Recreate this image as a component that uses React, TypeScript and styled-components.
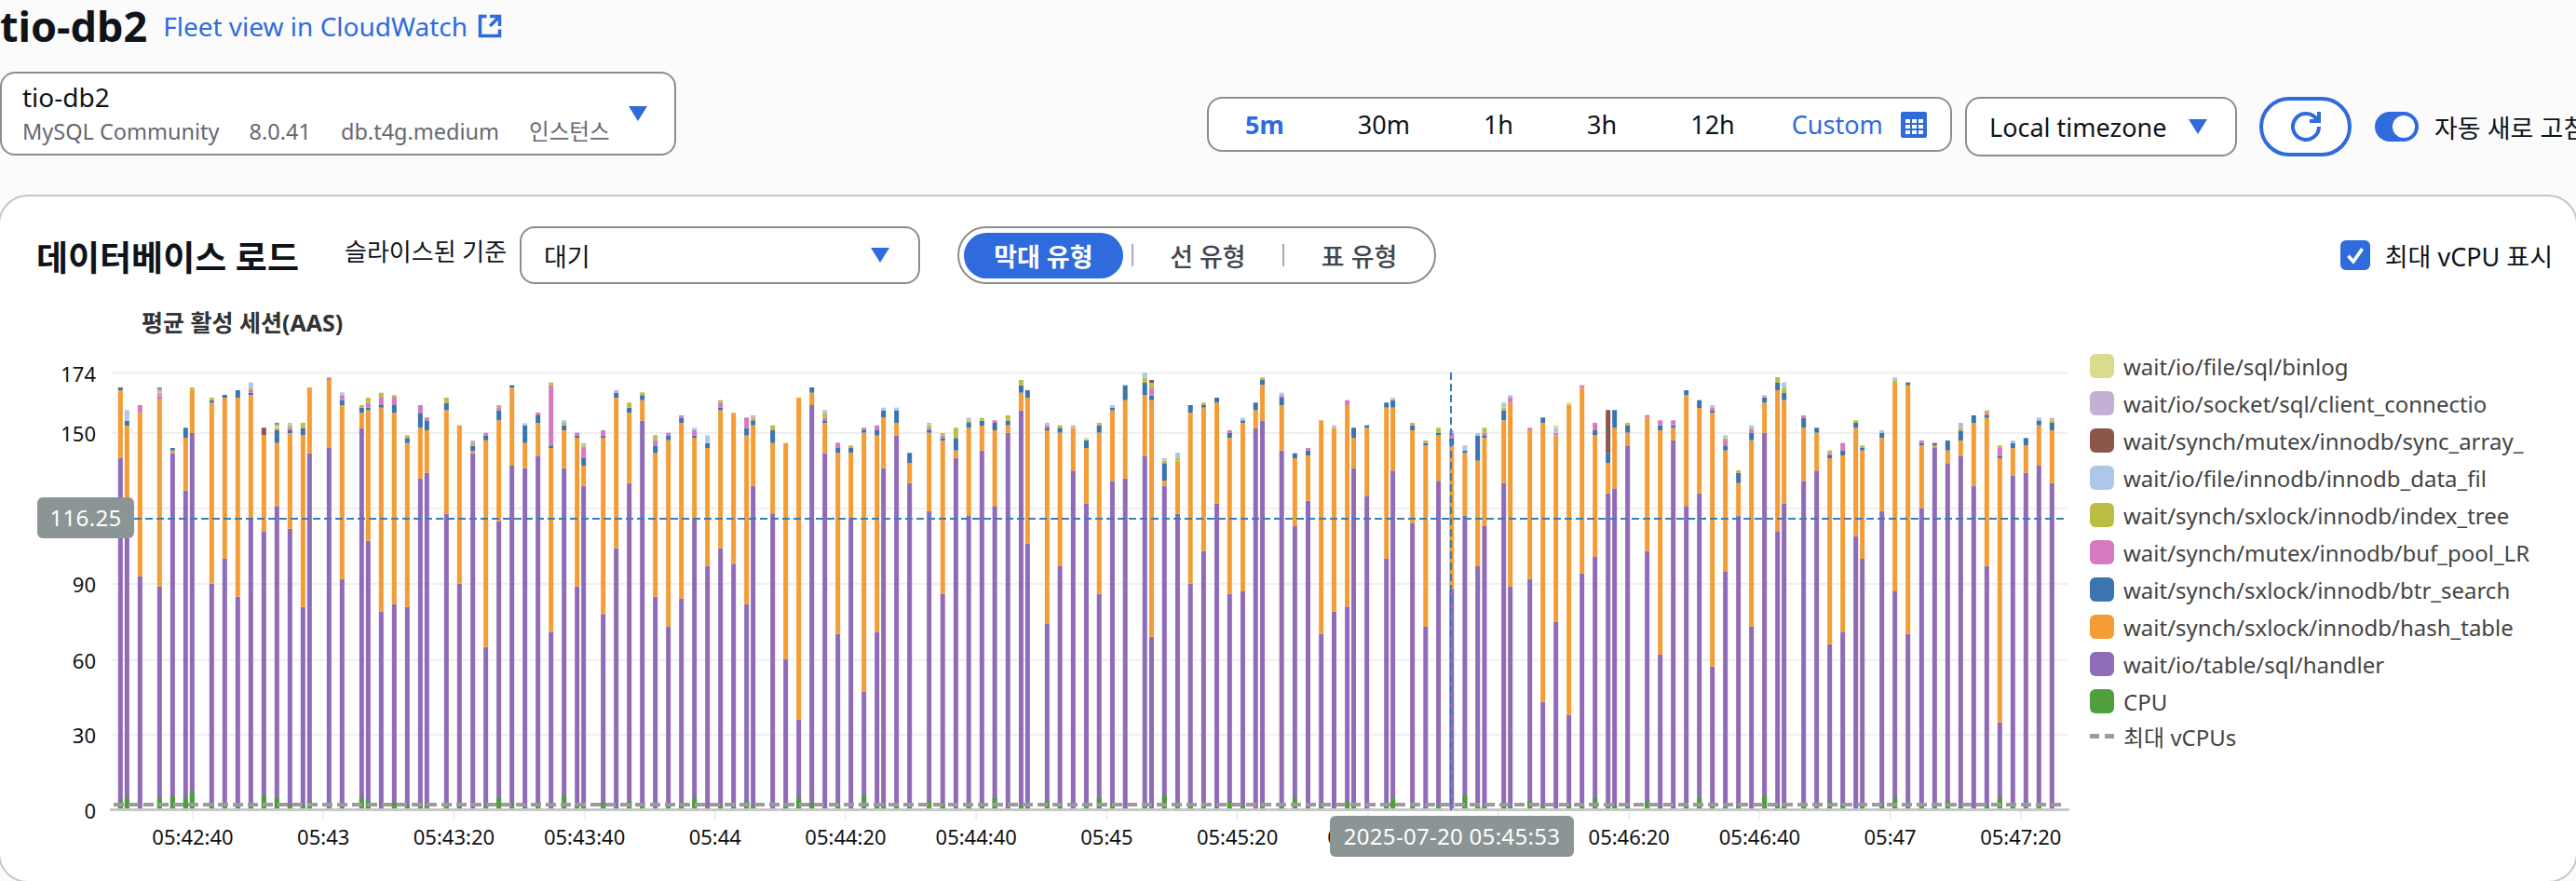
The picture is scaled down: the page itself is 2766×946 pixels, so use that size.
import React from "react";
import styled, { createGlobalStyle } from "styled-components";

const FONT = `"Noto Sans", "Noto Sans CJK KR", sans-serif`;
const BLUE = "#2f6bdc";
const INK = "#0f141a";
const LINE = "#8c8c94";

const Global = createGlobalStyle`
  html, body { margin: 0; padding: 0; background: #fbfbfc; overflow: hidden; }
  body { font-family: ${FONT}; color: ${INK}; }
  * { box-sizing: border-box; }
`;

const Page = styled.div`
  width: 2766px;
  height: 946px;
  overflow: hidden;
  display: flex;
  flex-direction: column;
  background: #fbfbfc;
`;
const TitleRow = styled.div`
  height: 56px;
  display: flex;
  align-items: center;
  flex-shrink: 0;
`;
const Heading = styled.h1`
  margin: 0;
  font-size: 45px;
  font-weight: 700;
  line-height: 56px;
`;
const FleetLink = styled.a`
  margin-left: 17px;
  font-size: 28px;
  line-height: 40px;
  color: ${BLUE};
  display: flex;
  align-items: center;
  gap: 10px;
`;
const ControlsRow = styled.div`
  margin-top: 21px;
  height: 90px;
  display: flex;
  align-items: flex-start;
  flex-shrink: 0;
`;
const InstanceSelect = styled.div`
  width: 726px;
  height: 90px;
  flex-shrink: 0;
  border: 2px solid ${LINE};
  border-radius: 16px;
  background: #fff;
  padding: 6px 30px 0 22px;
  position: relative;
`;
const InstanceName = styled.div`
  font-size: 28px;
  line-height: 38px;
`;
const InstanceMeta = styled.div`
  display: flex;
  font-size: 23.5px;
  line-height: 36px;
  color: #656871;
  gap: 32px;
  white-space: nowrap;
`;
const Caret = styled.svg`
  width: 20px;
  height: 16px;
  flex-shrink: 0;
  display: block;
`;
const CaretSlot = styled.span`
  position: absolute;
  right: 29px;
  top: 35px;
`;
const TimeGroup = styled.div`
  margin-left: 570px;
  margin-top: 27px;
  height: 59px;
  width: 800px;
  flex-shrink: 0;
  display: flex;
  align-items: center;
  gap: 79px;
  padding-left: 39px;
  border: 2px solid ${LINE};
  border-radius: 16px;
  background: #fff;
  font-size: 27px;
`;
const TimeOption = styled.span<{ $active?: boolean }>`
  font-weight: ${(p) => (p.$active ? 700 : 400)};
  color: ${(p) => (p.$active ? BLUE : INK)};
`;
const CustomOption = styled.span`
  margin-left: -18px;
  color: ${BLUE};
  display: flex;
  align-items: center;
  gap: 19px;
`;
const TimezoneSelect = styled.div`
  margin-left: 14px;
  margin-top: 27px;
  width: 292px;
  height: 64px;
  flex-shrink: 0;
  border: 2px solid ${LINE};
  border-radius: 16px;
  background: #fff;
  display: flex;
  align-items: center;
  justify-content: space-between;
  padding: 0 30px 0 24px;
  font-size: 27px;
`;
const RefreshButton = styled.div`
  margin-left: 24px;
  margin-top: 27px;
  width: 99px;
  height: 64px;
  flex-shrink: 0;
  border: 4px solid ${BLUE};
  border-radius: 32px;
  background: #fff;
  display: flex;
  align-items: center;
  justify-content: center;
`;
const ToggleWrap = styled.div`
  margin-left: 25px;
  margin-top: 43px;
  height: 32px;
  display: flex;
  align-items: center;
  gap: 17px;
  flex-shrink: 0;
  font-size: 27px;
  white-space: nowrap;
`;
const ToggleTrack = styled.span`
  width: 47px;
  height: 32px;
  border-radius: 16px;
  background: ${BLUE};
  display: flex;
  align-items: center;
  justify-content: flex-end;
  padding-right: 4px;
`;
const ToggleKnob = styled.span`
  width: 24px;
  height: 24px;
  border-radius: 50%;
  background: #fff;
`;
const Card = styled.section`
  margin: 42px -2px -2px -2px;
  flex: 1;
  background: #fff;
  border: 2px solid #c6c6cd;
  border-radius: 32px;
  display: flex;
  flex-direction: column;
`;
const HeaderRow = styled.div`
  margin-top: 32px;
  height: 62px;
  display: flex;
  align-items: center;
  padding: 0 25px 0 39px;
  flex-shrink: 0;
`;
const CardTitle = styled.h2`
  margin: 0;
  font-size: 37px;
  font-weight: 700;
  line-height: 48px;
  width: 282px;
  white-space: nowrap;
  position: relative;
  top: 3px;
`;
const SliceLabel = styled.span`
  margin-left: 49px;
  font-size: 26px;
  width: 172px;
  white-space: nowrap;
  position: relative;
  top: -5px;
`;
const SliceSelect = styled.div`
  margin-left: 16px;
  width: 430px;
  height: 62px;
  border: 2px solid ${LINE};
  border-radius: 16px;
  background: #fff;
  display: flex;
  align-items: center;
  justify-content: space-between;
  padding: 0 31px 0 24px;
  font-size: 27px;
`;
const Segmented = styled.div`
  margin-left: 40px;
  width: 514px;
  height: 62px;
  border: 2px solid ${LINE};
  border-radius: 31px;
  background: #fff;
  display: flex;
  align-items: center;
  padding-left: 5px;
  font-size: 27px;
  font-weight: 500;
  color: #424650;
`;
const SegmentActive = styled.span`
  width: 172px;
  height: 49px;
  border-radius: 25px;
  background: ${BLUE};
  color: #fff;
  font-weight: 700;
  display: flex;
  align-items: center;
  justify-content: center;
`;
const SegmentDivider = styled.span`
  width: 2px;
  height: 24px;
  background: #a9a9b0;
  flex-shrink: 0;
`;
const SegmentItem = styled.span<{ $w: number }>`
  width: ${(p) => p.$w}px;
  text-align: center;
  white-space: nowrap;
`;
const CheckWrap = styled.label`
  margin-left: auto;
  display: flex;
  align-items: center;
  gap: 16px;
  font-size: 27px;
`;
const CheckBox = styled.span`
  width: 32px;
  height: 32px;
  border-radius: 6px;
  background: ${BLUE};
  display: flex;
  align-items: center;
  justify-content: center;
`;
const ChartTitle = styled.div`
  margin: 28px 0 11px 152px;
  font-size: 25px;
  font-weight: 700;
  line-height: 26px;
  color: #333;
  flex-shrink: 0;
`;
const ChartRow = styled.div`
  display: flex;
  align-items: flex-start;
  height: 576px;
  flex-shrink: 0;
`;
const ChartWrap = styled.div`
  position: relative;
  width: 2240px;
  height: 560px;
  flex-shrink: 0;
`;
const Tag = styled.div<{ $x: number; $y: number; $w: number }>`
  position: absolute;
  left: ${(p) => p.$x}px;
  top: ${(p) => p.$y}px;
  width: ${(p) => p.$w}px;
  height: 44px;
  border-radius: 6px;
  background: #8b9595;
  color: #fff;
  font-size: 24px;
  line-height: 44px;
  text-align: center;
  white-space: nowrap;
  letter-spacing: 0.3px;
`;
const Legend = styled.div`
  margin-left: 4px;
  padding-top: 3px;
  display: flex;
  flex-direction: column;
  flex-shrink: 0;
`;
const LegendRow = styled.div`
  height: 40px;
  display: flex;
  align-items: center;
  gap: 10px;
  font-size: 24px;
  color: #444;
  white-space: nowrap;
`;
const LegendDashRow = styled(LegendRow)`
  height: 34px;
`;
const Swatch = styled.span<{ $color: string }>`
  width: 26px;
  height: 26px;
  border-radius: 6px;
  background: ${(p) => p.$color};
  flex-shrink: 0;
`;
const DashKey = styled.span`
  width: 26px;
  height: 5px;
  flex-shrink: 0;
  background: repeating-linear-gradient(90deg, #9b9b9b 0 10px, transparent 10px 16px);
`;

const C: Record<string, string> = {
  b: "#3b74ae",
  p: "#d57ac0",
  o: "#bcbd45",
  l: "#aec7e8",
  r: "#8c564b",
  v: "#c5b0d5",
  y: "#dbdb8d",
  g: "#8f8f8f",
};
const PURPLE = "#8f6bb8";
const ORANGE = "#f49d37";
const GREEN = "#4f9f3d";

const sections = [
  {
    x0: 0, y0: 380, sx: 3, sy: 3,
    bars: `388 336 117 b108|409 510 231 b215 l181|451 716 190 p165|514 749 149 p134 o125 v116 g108|556 320 311 b303|598 440 270 b238|619 255 117 o108|682 740 157 b149 o141|724 659 141 b132|766 782 141 b117|808 530 133 b125 p117 o109 l92|850 571 262 r238|892 490 287 b246 o238 y230 g222|934 563 255 b246 p238 o230 l222|976 815 262 b239 o222|997 320 108|1060 303 84 p76|1102 725 165 b149 p133 l124|1165 239 190 b173 o165|1186 602 181 b173 p158 o141|1228 830 173 b165 p141 o125|1270 806 190 b165 p141 o133|1312 815 287 b271 o262|1354 401 238 b190 p165|1375 383 246 b214 p205|1438 515 181 b158 o141|1480 740 230`,
  },
  {
    x0: 490, y0: 395, sx: 3, sy: 3,
    bars: `53 275 267 b251 o243 v234|95 899 233 b218 p209|137 494 169 b137 p129 o120|179 315 64 b56|221 323 242 b186 l178|263 283 177 b153 p144|305 851 258 b250 p56 o47|347 323 201 b185 o177 l169|389 704 225 b218 p209|410 380 315 b291 p258 o250 l242|473 793 225 b218 p201|515 581 96 b80 v72|557 371 144 b128 o112|599 170 104 b88 o79|641 737 274 b250 p233 o217|683 833 233 b218 p209|725 743 177 b161 p153|767 484 225 b218 p201 l193|809 638 258 b242 l217|851 581 136 b128 p112 o104|893 631 145|935 761 218 b194 p160|956 380 185 b169 o161 v153|1019 469 242 b201 o185|1061 938 242|1103 1133 96|1145 120 80 b63|1187 275 177 b169 p161 o145 l136|1229 857 274 b258 p241|1271 485 274 b258 o250|1313 1043 209 b201 p193|1355 851 218 b201 p185|1376 323 160 b137 l128|1418 218 177 b137 l128|1460 371 307 b274|1523 461 209 b201 p193 o185 l177`,
  },
  {
    x0: 1000, y0: 390, sx: 2.613, sy: 3,
    bars: `32 743 249 b241 p233 o225|69 305 281 b241 o208|105 492 208 b192 o184 l176|142 281 201 b185 o176|178 460 216 b192 p184|215 224 200 b185 o168|252 152 95 b71 o54|270 581 111 b87|325 840 216 b208 p200 l192|361 654 224 b208 o200|398 346 208 v200|435 452 273 b248 y240|471 743 224 b200 o192|508 379 152 b144 l135|544 371 119 b71|599 298 103 b63 o47 l30|618 881 119 b104 p79 o63 r54|654 395 378 b322 o314 l306|691 485 314 o306 l288|727 710 159 b135|764 605 143 b135 o127|801 452 127 b111|837 743 240 b224 p216|874 735 192 b184 l176|910 209 151 b127|929 185 70 b54 o46|983 281 135 b111 p103 l95|1020 525 306 b290|1057 443 297 b281 p273|1094 872 184|1130 800 208 l200|1167 784 135 p119|1185 338 240 b208|1222 427 208 b200|1277 629 143 b127|1295 346 143 b119 l111|1350 516 216 b200 o192|1387 849 265 b257 o249|1423 379 232 b224 o208|1460 727 265 b241 p224 l216|1497 492 289 b281 l265|1533 654 314 b233 l225|1552 525 240 b232 p224 o208`,
  },
  {
    x0: 1590, y0: 395, sx: 3, sy: 3,
    bars: `74 371 169 b137 o128 l112|95 704 112 p96 l88|158 680 201 p193|200 1076 177 b160|242 818 217 p209 l193 y185|284 1117 120 y112|326 662 64 p56|368 607 217 b201 p177|410 404 306 b274 r136|431 388 193 b136|473 250 209 b185 o177|536 590 160 p152|578 923 201 b185 p169|620 233 193 b185 p169|662 445 88 b72|704 404 129 b104|746 962 145 b137 p129 l120|788 655 266 b250 p234 o226 l217|830 477 371 b338 o330|872 833 233 b209 p201 o193 l185|914 209 112 b96 v88|956 526 72 b48 o30|977 437 104 b80 o64 l47|1040 364 193 b161 p153|1082 331 209 b193|1124 890 291 b282 p274 o266|1166 850 282 b266 p242|1208 542 193 b177 o169|1229 615 266 b258 o250|1292 461 225 b209 l201|1334 720 48 o40 l31|1376 857 56 b47`,
  },
  {
    x0: 2040, y0: 395, sx: 3, sy: 3,
    bars: `70 453 250 b242 p234|112 258 250 b242|154 307 266 b234|196 283 234 b202 o194 v177|238 380 177 b153|280 638 161 b153 p145 o137|322 1142 291 b283 p258 o250|364 347 258 b242 l234|406 338 250 b226|448 315 185 b169 l160|490 371 201 b177 o169 v161`,
  },
];

const BASE = 870;
const firstCpu = [10, 13, 2, 13, 16, 13, 21, 5, 4, 3, 4, 16, 13, 5, 5, 10, 3, 3, 13, 10, 2, 8, 5, 8, 5, 8, 5];
const cpuCycle = [5, 3, 10, 4, 0, 5, 13, 8, 3, 5, 2, 16, 5, 4, 8, 3, 10, 5, 0, 4, 5, 13, 3];

type Seg = { y: number; h: number; fill: string };
type Bar = { x: number; segs: Seg[] };

const bars: Bar[] = [];
sections.forEach((s) => {
  s.bars.split("|").forEach((row) => {
    const parts = row.trim().split(" ");
    const x = s.x0 + Number(parts[0]) / s.sx;
    const toY = (v: number) => s.y0 + v / s.sy;
    const i = bars.length;
    const cpu = i < firstCpu.length ? firstCpu[i] : cpuCycle[i % cpuCycle.length];
    const purpleY = toY(Number(parts[1]));
    const orangeY = toY(Number(parts[2]));
    const segs: Seg[] = [
      { y: purpleY, h: BASE - purpleY, fill: PURPLE },
      { y: orangeY, h: purpleY - orangeY, fill: ORANGE },
    ];
    let prev = orangeY;
    parts.slice(3).forEach((e) => {
      const top = toY(Number(e.slice(1)));
      segs.push({ y: top, h: prev - top, fill: C[e[0]] });
      prev = top;
    });
    segs.push({ y: BASE - cpu, h: cpu, fill: GREEN });
    bars.push({ x, segs });
  });
});

const gridYs = [
  { y: 400.5, label: "174" },
  { y: 465, label: "150" },
  { y: 546, label: "" },
  { y: 627, label: "90" },
  { y: 708.5, label: "60" },
  { y: 789, label: "30" },
];
const xLabels = [
  "05:42:40", "05:43", "05:43:20", "05:43:40", "05:44", "05:44:20", "05:44:40", "05:45",
  "05:45:20", "05:45:40", "05:46", "05:46:20", "05:46:40", "05:47", "05:47:20",
];
const legend = [
  ["wait/io/file/sql/binlog", C.y],
  ["wait/io/socket/sql/client_connectio", C.v],
  ["wait/synch/mutex/innodb/sync_array_", C.r],
  ["wait/io/file/innodb/innodb_data_fil", C.l],
  ["wait/synch/sxlock/innodb/index_tree", C.o],
  ["wait/synch/mutex/innodb/buf_pool_LR", C.p],
  ["wait/synch/sxlock/innodb/btr_search", C.b],
  ["wait/synch/sxlock/innodb/hash_table", ORANGE],
  ["wait/io/table/sql/handler", PURPLE],
  ["CPU", GREEN],
];

const TriangleIcon = () => (
  <Caret viewBox="0 0 20 16">
    <polygon points="0,0 20,0 10,16" fill={BLUE} />
  </Caret>
);

const Chart = () => (
  <svg width={2240} height={560} viewBox="0 370 2240 560" style={{ display: "block" }}>
    {gridYs.map((g) => (
      <line key={g.y} x1={120} x2={2220} y1={g.y} y2={g.y} stroke="#f0f0f0" strokeWidth={2} />
    ))}
    {xLabels.map((_, i) => (
      <line key={i} x1={207 + i * 140.2} x2={207 + i * 140.2} y1={871} y2={880} stroke="#eeeeee" strokeWidth={2} />
    ))}
    {bars.map((b, i) =>
      b.segs.map((s, j) => (
        <rect key={`${i}-${j}`} x={b.x - 2.5} y={s.y} width={5} height={Math.max(s.h, 0)} fill={s.fill} />
      ))
    )}
    <line x1={118} x2={2222} y1={869.5} y2={869.5} stroke="#c8c8c8" strokeWidth={3} />
    <line x1={122} x2={2218} y1={864} y2={864} stroke="#9b9b9b" strokeWidth={4} strokeDasharray="11 5" />
    <line x1={144} x2={2216} y1={557} y2={557} stroke="#367dbd" strokeWidth={2} strokeDasharray="8 4" />
    <line x1={1558} x2={1558} y1={400} y2={870} stroke="#367dbd" strokeWidth={2} strokeDasharray="8 4" />
    <g fontFamily={FONT} fontSize={22} fill="#111">
      {gridYs.filter((g) => g.label).map((g) => (
        <text key={g.label} x={103} y={g.y} textAnchor="end" dominantBaseline="central">{g.label}</text>
      ))}
      <text x={103} y={870} textAnchor="end" dominantBaseline="central">0</text>
      {xLabels.map((t, i) => (
        <text key={t} x={207 + i * 140.2} y={898} textAnchor="middle" dominantBaseline="central">{t}</text>
      ))}
    </g>
  </svg>
);

export default function App() {
  return (
    <Page>
      <Global />
      <TitleRow>
        <Heading>tio-db2</Heading>
        <FleetLink>
          Fleet view in CloudWatch
          <svg width={28} height={28} viewBox="0 0 16 16" fill="none" stroke={BLUE} strokeWidth={2}>
            <path d="M14 8.01v-6H8M14.02 2 8 8.01" />
            <path d="M6 2.01H2v12h12V10" />
          </svg>
        </FleetLink>
      </TitleRow>
      <ControlsRow>
        <InstanceSelect>
          <InstanceName>tio-db2</InstanceName>
          <InstanceMeta>
            <span>MySQL Community</span>
            <span>8.0.41</span>
            <span>db.t4g.medium</span>
            <span>인스턴스</span>
          </InstanceMeta>
          <CaretSlot><TriangleIcon /></CaretSlot>
        </InstanceSelect>
        <TimeGroup>
          <TimeOption $active>5m</TimeOption>
          <TimeOption>30m</TimeOption>
          <TimeOption>1h</TimeOption>
          <TimeOption>3h</TimeOption>
          <TimeOption>12h</TimeOption>
          <CustomOption>
            Custom
            <svg width={28} height={28} viewBox="0 0 28 28">
              <rect width={28} height={28} rx={2} fill={BLUE} />
              {[5, 12, 19].map((x) =>
                [8, 14, 20].map((y) => <rect key={`${x}${y}`} x={x} y={y} width={5} height={4} fill="#fff" />)
              )}
            </svg>
          </CustomOption>
        </TimeGroup>
        <TimezoneSelect>
          Local timezone
          <TriangleIcon />
        </TimezoneSelect>
        <RefreshButton>
          <svg width={32} height={32} viewBox="0 0 16 16" fill="none" stroke={BLUE} strokeWidth={2}>
            <path d="M10 5h5V0" />
            <path d="M15 8a7 7 0 1 1-1-3.6" />
          </svg>
        </RefreshButton>
        <ToggleWrap>
          <ToggleTrack><ToggleKnob /></ToggleTrack>
          자동 새로 고침
        </ToggleWrap>
      </ControlsRow>
      <Card>
        <HeaderRow>
          <CardTitle>데이터베이스 로드</CardTitle>
          <SliceLabel>슬라이스된 기준</SliceLabel>
          <SliceSelect>
            대기
            <TriangleIcon />
          </SliceSelect>
          <Segmented>
            <SegmentActive>막대 유형</SegmentActive>
            <SegmentItem $w={9} />
            <SegmentDivider />
            <SegmentItem $w={162}>선 유형</SegmentItem>
            <SegmentDivider />
            <SegmentItem $w={162}>표 유형</SegmentItem>
          </Segmented>
          <CheckWrap>
            <CheckBox>
              <svg width={22} height={22} viewBox="0 0 16 16" fill="none" stroke="#fff" strokeWidth={2.6}>
                <path d="M2.5 8.5 6.5 13 13.5 3" />
              </svg>
            </CheckBox>
            최대 vCPU 표시
          </CheckWrap>
        </HeaderRow>
        <ChartTitle>평균 활성 세션(AAS)</ChartTitle>
        <ChartRow>
          <ChartWrap>
            <Chart />
            <Tag $x={40} $y={164} $w={104}>116.25</Tag>
            <Tag $x={1428} $y={506} $w={262}>2025-07-20 05:45:53</Tag>
          </ChartWrap>
          <Legend>
            {legend.map(([name, color]) => (
              <LegendRow key={name}>
                <Swatch $color={color} />
                {name}
              </LegendRow>
            ))}
            <LegendDashRow>
              <DashKey />
              최대 vCPUs
            </LegendDashRow>
          </Legend>
        </ChartRow>
      </Card>
    </Page>
  );
}
